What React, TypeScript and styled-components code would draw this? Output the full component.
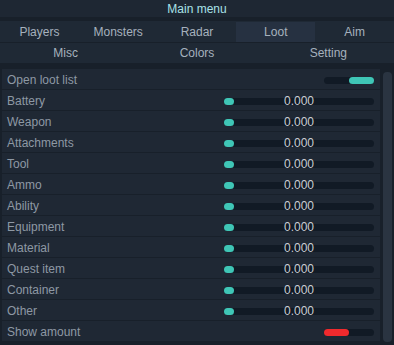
import { createGlobalStyle } from "styled-components";
import styled from "styled-components";

const GlobalStyle = createGlobalStyle`
    html, body {
        margin: 0;
        padding: 0;
        background: #1b232e;
    }
    body {
        font-family: "Liberation Sans", Arial, sans-serif;
    }
`;

const Window = styled.div`
    width: 394px;
    height: 345px;
    background: #18202a;
    display: flex;
    flex-direction: column;
    overflow: hidden;
`;

const TitleBar = styled.div`
    height: 18px;
    background: #1e2733;
    color: #a9e2e8;
    font-size: 12px;
    display: flex;
    align-items: center;
    justify-content: center;
    margin-bottom: 4px;
`;

const TabRow = styled.div<{ $cols: number }>`
    display: grid;
    grid-template-columns: repeat(${p => p.$cols}, 1fr);
    height: 20px;
    padding-top: 1px;
    background: #1f2935;
    border-bottom: 1px solid #18202a;
`;

const Tab = styled.div<{ $active?: boolean }>`
    display: flex;
    align-items: center;
    justify-content: center;
    font-size: 12px;
    color: #a6b1bd;
    background: ${p => (p.$active ? "#263141" : "transparent")};
`;

const Body = styled.div`
    flex: 1;
    display: flex;
    gap: 3px;
    padding: 5px 2px 3px 2px;
`;

const List = styled.div`
    flex: 1;
    display: flex;
    flex-direction: column;
`;

const Row = styled.div`
    height: 20px;
    border-bottom: 1px solid #18202a;
    background: #1f2834;
    display: flex;
    align-items: center;
    padding: 2px 6px 0 5px;
    box-sizing: border-box;
    height: 21px;
    font-size: 12px;
    color: #8e98a4;
`;

const Label = styled.span`
    flex: 1;
`;

const Slider = styled.div`
    position: relative;
    width: 150px;
    height: 7px;
    border-radius: 4px;
    background: #111a25;
`;

const Knob = styled.div`
    position: absolute;
    left: 0;
    top: 0;
    width: 10px;
    height: 7px;
    border-radius: 4px;
    background: #3fc6b6;
`;

const Value = styled.span`
    position: absolute;
    left: 0;
    right: 0;
    top: -4px;
    text-align: center;
    font-size: 12px;
    line-height: 14px;
    color: #c9cdd2;
`;

const Toggle = styled.div<{ $on: boolean }>`
    width: 50px;
    height: 7px;
    border-radius: 4px;
    background: #111a25;
    display: flex;
    justify-content: ${p => (p.$on ? "flex-end" : "flex-start")};

    &::after {
        content: "";
        width: 25px;
        height: 7px;
        border-radius: 4px;
        background: ${p => (p.$on ? "#3fc6b6" : "#f02a2d")};
    }
`;

const Scrollbar = styled.div`
    width: 9px;
    border-radius: 4px;
    background: #2a3441;
    margin-top: 3px;
`;

const topTabs = ["Players", "Monsters", "Radar", "Loot", "Aim"];
const subTabs = ["Misc", "Colors", "Setting"];
const items = [
    "Battery", "Weapon", "Attachments", "Tool", "Ammo", "Ability",
    "Equipment", "Material", "Quest item", "Container", "Other",
];

const App = () => {
    return (
        <Window>
            <GlobalStyle />
            <TitleBar>Main menu</TitleBar>
            <TabRow $cols={5}>
                {topTabs.map(t => <Tab key={t} $active={t === "Loot"}>{t}</Tab>)}
            </TabRow>
            <TabRow $cols={3}>
                {subTabs.map(t => <Tab key={t}>{t}</Tab>)}
            </TabRow>
            <Body>
                <List>
                    <Row>
                        <Label>Open loot list</Label>
                        <Toggle $on={true} />
                    </Row>
                    {items.map(name => (
                        <Row key={name}>
                            <Label>{name}</Label>
                            <Slider>
                                <Knob />
                                <Value>0.000</Value>
                            </Slider>
                        </Row>
                    ))}
                    <Row>
                        <Label>Show amount</Label>
                        <Toggle $on={false} />
                    </Row>
                </List>
                <Scrollbar />
            </Body>
        </Window>
    );
};

export default App;
